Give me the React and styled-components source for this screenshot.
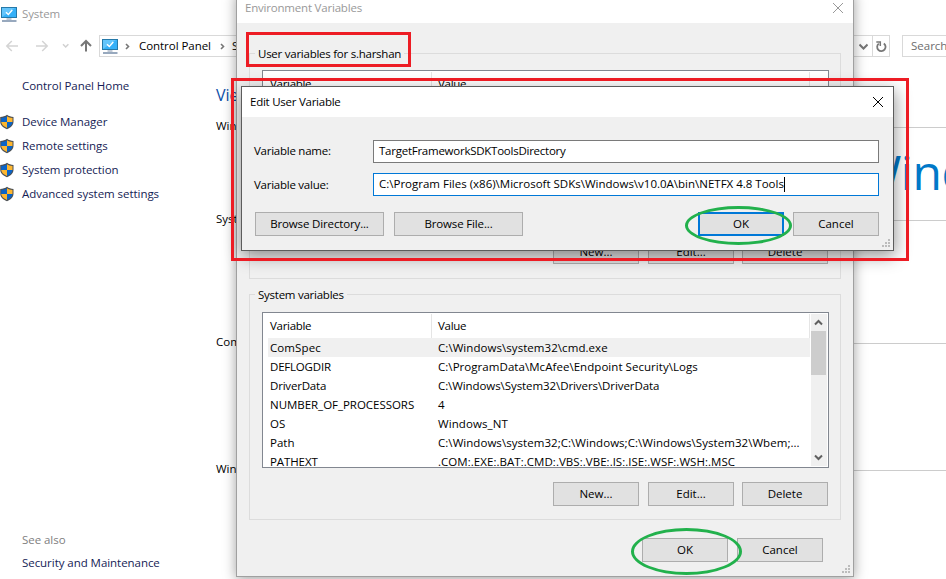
import React from 'react'
import styled, { createGlobalStyle } from 'styled-components'

const GlobalStyle = createGlobalStyle`
  * {
    box-sizing: border-box;
  }

  body {
    margin: 0;
    background: #fff;
    overflow: hidden;
  }
`

const DesktopDiv = styled.div`
  position: relative;
  width: 946px;
  height: 579px;
  overflow: hidden;
  background: #fff;
  color: #000;
  font-family: "Open Sans", "Noto Sans", sans-serif;
  font-size: 11.5px;
  line-height: 16px;
  white-space: nowrap;
`

const Label = styled.span`
  letter-spacing: ${({ $track = 0 }) => $track}px;
`

/* System window */

const SystemTitleDiv = styled.div`
  display: flex;
  align-items: center;
  gap: 5px;
  height: 27px;
  padding-left: 1px;
  color: #999;
`

const NavDiv = styled.div`
  display: flex;
  align-items: center;
  height: 22px;
  margin-top: 8px;
`

const NavButtonsDiv = styled.div`
  display: flex;
  width: 99px;
  flex: none;
`

const AddressDiv = styled.div`
  display: flex;
  align-items: center;
  width: 791px;
  height: 22px;
  flex: none;
  padding-left: 2px;
  border: 1px solid #d9d9d9;
`

const CrumbDiv = styled.div`
  display: flex;
  align-items: center;
  flex: 1;
  padding-left: 6px;
  gap: 6px;
`

const AddressButtonDiv = styled.div`
  display: flex;
  align-items: center;
  justify-content: center;
  width: 17px;
  height: 20px;
  border-left: ${({ $divided }) => $divided ? `1px solid #d9d9d9` : `none`};
`

const SearchDiv = styled.div`
  flex: 1;
  height: 22px;
  margin-left: 12px;
  padding: 2px 8px;
  border: 1px solid #d9d9d9;
  border-right: none;
  color: #6d6d6d;
`

const SystemBodyDiv = styled.div`
  display: flex;
  height: 522px;
`

const SidebarDiv = styled.div`
  display: flex;
  flex-direction: column;
  width: 216px;
  flex: none;
  padding: 21px 0 5px;
  letter-spacing: -0.05px;
`

const SidebarLinkDiv = styled.div`
  display: flex;
  align-items: center;
  height: ${({ $height = 24 }) => $height}px;
  padding-left: ${({ $plain }) => $plain ? 22 : 0}px;
  gap: 8px;
  color: ${({ $muted }) => $muted ? `#808080` : `#151c55`};
`

const SpacerDiv = styled.div`
  flex: ${({ $size }) => $size ? `0 0 ${$size}px` : 1};
`

const ContentDiv = styled.div`
  flex: 1;
  min-width: 0;
`

const PageHeadingDiv = styled.div`
  height: 61px;
  padding-top: 27px;
  font-size: 16px;
  line-height: 22px;
  color: #0b4fa8;
`

const SectionDiv = styled.div`
  height: ${({ $height }) => $height}px;
`

const SectionHeadingDiv = styled.div`
  display: flex;
  align-items: center;
  gap: 10px;
  height: 16px;

  &::after {
    content: "";
    flex: 1;
    height: 1px;
    margin-top: 3px;
    background: #ccc;
  }
`

const BrandDiv = styled.div`
  padding: 8px 0 0 641px;
  font-size: 48px;
  line-height: 60px;
  letter-spacing: -0.5px;
  color: #0078c8;
`

/* Dialogs */

const DialogDiv = styled.div`
  position: absolute;
  background: #f0f0f0;
`

const EnvironmentDialogDiv = styled(DialogDiv)`
  left: 236px;
  top: -8px;
  width: 618px;
  height: 585px;
  border: 1px solid #a0a0a0;
  box-shadow: 0 2px 12px rgba(0, 0, 0, 0.38);
`

const EditDialogDiv = styled(DialogDiv)`
  left: 241px;
  top: 86px;
  width: 653px;
  height: 165px;
  border: 1px solid #5c5c5c;
  box-shadow: 1px 5px 16px rgba(0, 0, 0, 0.42);
`

const DialogTitleDiv = styled.div`
  display: flex;
  align-items: center;
  justify-content: space-between;
  height: 30px;
  padding: 0 9px 0 8px;
  background: #fff;
  color: ${({ $inactive }) => $inactive ? `#999` : `#000`};
`

const GroupDiv = styled.div`
  width: 592px;
  height: 226px;
  margin: ${({ $top }) => $top}px 0 0 12px;
  padding: 0 12px;
  border: 1px solid #dcdcdc;
`

const LegendDiv = styled.div`
  width: fit-content;
  height: 16px;
  margin: -8px 0 ${({ $gap }) => $gap}px -7px;
  padding: 0 3px;
  background: #f0f0f0;
  letter-spacing: -0.25px;
`

const ListDiv = styled.div`
  display: flex;
  width: 567px;
  height: 156px;
  padding: 1px 1px 1px 0;
  border: 1px solid #828790;
  background: #fff;
`

const TableDiv = styled.div`
  width: 548px;
  flex: none;
  overflow: hidden;
`

const TableHeaderDiv = styled.div`
  display: flex;
  height: 24px;
  letter-spacing: -0.3px;
`

const HeaderCellDiv = styled.div`
  width: ${({ $width }) => $width}px;
  padding: 4px 0 0 ${({ $indent }) => $indent}px;
  border-right: 1px solid #e5e5e5;
`

const RowDiv = styled.div`
  display: grid;
  grid-template-columns: 168px 1fr;
  align-items: center;
  height: 19px;
  margin: 0 1px 0 5px;
  padding-left: 2px;
  background: ${({ $selected }) => $selected ? `#f0f0f0` : `transparent`};
`

const ScrollbarDiv = styled.div`
  display: flex;
  flex-direction: column;
  width: 16px;
  flex: none;
  background: #f0f0f0;
`

const ScrollButtonDiv = styled.div`
  display: flex;
  align-items: center;
  justify-content: center;
  width: 15px;
  height: 17px;
`

const ThumbDiv = styled.div`
  width: 15px;
  height: 44px;
  margin-bottom: auto;
  background: #cdcdcd;
`

const ButtonRowDiv = styled.div`
  display: flex;
  justify-content: flex-end;
  gap: 9px;
  margin-top: ${({ $top }) => $top}px;
  padding-right: ${({ $right = 0 }) => $right}px;
`

const Button = styled.button`
  width: ${({ $wide }) => $wide ? 129 : 86}px;
  height: 24px;
  margin-right: ${({ $after = 0 }) => $after}px;
  padding: 0 0 1px;
  border: ${({ $primary }) => $primary ? `2px solid #0078d7` : `1px solid #adadad`};
  background: #e1e1e1;
  color: #000;
  font: inherit;
  letter-spacing: ${({ $wide }) => $wide ? -0.15 : 0}px;
`

const FieldRowDiv = styled.div`
  display: flex;
  align-items: center;
  height: 23px;
  margin: ${({ $top }) => $top}px 14px 0 12px;
`

const FieldLabelDiv = styled.div`
  width: 119px;
  padding-bottom: ${({ $raised }) => $raised ? 2 : 0}px;
  letter-spacing: -0.25px;
`

const FieldDiv = styled.div`
  display: flex;
  align-items: center;
  flex: 1;
  height: 23px;
  padding: 0 5px 1px;
  border: 1px solid ${({ $focused }) => $focused ? `#0078d7` : `#7a7a7a`};
  background: #fff;
`

const CaretSpan = styled.span`
  width: 1px;
  height: 15px;
  background: #000;
`

const GripSvg = styled.svg`
  position: absolute;
  right: 2px;
  bottom: 2px;
`

/* Marks drawn over the windows */

const RedBoxDiv = styled.div`
  position: absolute;
  left: ${({ $x }) => $x}px;
  top: ${({ $y }) => $y}px;
  width: ${({ $width }) => $width}px;
  height: ${({ $height }) => $height}px;
  border: 3px solid #ed1c24;
`

const GreenOvalDiv = styled(RedBoxDiv)`
  border-color: #22b14c;
  border-radius: 50%;
`

const ComputerIcon = () =>
  <svg width="16" height="16" viewBox="0 0 16 16">
    <rect x="0.5" y="1.5" width="15" height="10" fill="#35b0f8" stroke="#2579a9"/>
    <path d="M1 11V2h13z" fill="#64c5fb"/>
    <path d="M5 6.3l2.3 2.2L11.3 4" fill="none" stroke="#fff" strokeWidth="1.4"/>
    <path d="M5.5 13h5" stroke="#8295ad" strokeWidth="1"/>
    <path d="M1 15h14.500" stroke="#7e93ae" strokeWidth="1.6"/>
  </svg>

const ShieldIcon = () =>
  <svg width="14" height="16" viewBox="0 0 14 16">
    <path d="M7 .8C5.200 2.200 3 2.900 .2 3v4.500c0 3.600 2.600 6 6.800 7.800 4.200-1.800 6.500-4.200 6.500-7.800V3C11 2.900 8.800 2.200 7 .8z" fill="#4c5054"/>
    <path d="M7 2.300C5.400 3.300 3.500 3.900 1.200 4.100V8H7z" fill="#0a64c8"/>
    <path d="M7 2.300c1.600 1 3.300 1.600 5.500 1.800V8H7z" fill="#fdb62f"/>
    <path d="M1.200 8H7v6C3.600 12.500 1.500 10.700 1.200 8z" fill="#fdb62f"/>
    <path d="M12.500 8H7v6c3.400-1.500 5.200-3.300 5.500-6z" fill="#0a64c8"/>
  </svg>

const NavIcons = () =>
  <svg width="99" height="22" viewBox="0 0 99 22" fill="none">
    <path d="M18 11H7M11.800 6L6.800 11l5 5M36 11h11M42.200 6l5 5-5 5" stroke="#d4d4d4" strokeWidth="1.500"/>
    <path d="M63 9.300l2.700 2.700 2.700-2.700" stroke="#d0d0d0" strokeWidth="1.500"/>
    <path d="M86 16.500V6.500M81 11l5-5 5 5" stroke="#777" strokeWidth="2"/>
  </svg>

const ChevronIcon = ({ d, color = `#606060`, width = 2 }) =>
  <svg width="9" height="9" viewBox="0 0 9 9" fill="none">
    <path d={d} stroke={color} strokeWidth={width}/>
  </svg>

const RefreshIcon = () =>
  <svg width="12" height="13" viewBox="0 0 12 13" fill="none">
    <path d="M3.800 3.600A4.200 4.200 0 1 0 8.800 3.500" stroke="#777" strokeWidth="1.800"/>
    <path d="M1.300 2h4v4" stroke="#777" strokeWidth="1.500"/>
  </svg>

const CloseIcon = ({ color }) =>
  <svg width="12" height="12" viewBox="0 0 12 12">
    <path d="M1 1l10 10M11 1L1 11" stroke={color} strokeWidth="1"/>
  </svg>

const Grip = () =>
  <GripSvg width="9" height="9" viewBox="0 0 9 9" fill="#bcbcbc">
    <path d="M6 0h2v2H6zM3 3h2v2H3zM6 3h2v2H6zM0 6h2v2H0zM3 6h2v2H3zM6 6h2v2H6z"/>
  </GripSvg>

// name, value, letter spacing of each
const systemVariables = [
  [`ComSpec`, `C:\\Windows\\system32\\cmd.exe`, 0.1, 0.06],
  [`DEFLOGDIR`, `C:\\ProgramData\\McAfee\\Endpoint Security\\Logs`, -0.2, 0.05],
  [`DriverData`, `C:\\Windows\\System32\\Drivers\\DriverData`, -0.2, -0.08],
  [`NUMBER_OF_PROCESSORS`, `4`, -0.03, 0],
  [`OS`, `Windows_NT`, 0, 0.1],
  [`Path`, `C:\\Windows\\system32;C:\\Windows;C:\\Windows\\System32\\Wbem;...`, 0, 0.05],
  [`PATHEXT`, `.COM;.EXE;.BAT;.CMD;.VBS;.VBE;.JS;.JSE;.WSF;.WSH;.MSC`, -0.1, 0.04]
]

const tasks = [`Device Manager`, `Remote settings`, `System protection`, `Advanced system settings`]

const VariableList = ({ rows }) =>
  <ListDiv>
    <TableDiv>
      <TableHeaderDiv>
        <HeaderCellDiv $width={169} $indent={7}>Variable</HeaderCellDiv>
        <HeaderCellDiv $width={378} $indent={6}>Value</HeaderCellDiv>
      </TableHeaderDiv>
      {
        rows.map(([name, value, nameTrack, valueTrack], index) =>
          <RowDiv key={name} $selected={index === 0}>
            <Label $track={nameTrack}>{name}</Label>
            <Label $track={valueTrack}>{value}</Label>
          </RowDiv>
        )
      }
    </TableDiv>
    {
      rows.length > 0 &&
        <ScrollbarDiv>
          <ScrollButtonDiv><ChevronIcon d="M1 6.500l3.500-3.500L8 6.500"/></ScrollButtonDiv>
          <ThumbDiv/>
          <ScrollButtonDiv><ChevronIcon d="M1 2.500L4.500 6 8 2.500"/></ScrollButtonDiv>
        </ScrollbarDiv>
    }
  </ListDiv>

const VariableGroup = ({ title, rows, top, gap }) =>
  <GroupDiv $top={top}>
    <LegendDiv $gap={gap}>{title}</LegendDiv>
    <VariableList rows={rows}/>
    <ButtonRowDiv $top={14}>
      <Button>New...</Button>
      <Button $after={-1}>Edit...</Button>
      <Button>Delete</Button>
    </ButtonRowDiv>
  </GroupDiv>

const SystemWindow = () =>
  <div>
    <SystemTitleDiv><ComputerIcon/><Label $track={-0.1}>System</Label></SystemTitleDiv>
    <NavDiv>
      <NavButtonsDiv><NavIcons/></NavButtonsDiv>
      <AddressDiv>
        <ComputerIcon/>
        <CrumbDiv>
          <ChevronIcon d="M2 2l2.500 2.500L2 7" color="#777" width={1.6}/>
          <Label $track={-0.05}>Control Panel</Label>
          <ChevronIcon d="M4 2l2.500 2.500L4 7" color="#777" width={1.6}/>
          <Label>System and Security</Label>
        </CrumbDiv>
        <AddressButtonDiv><ChevronIcon d="M.500 2.500l4 4 4-4" color="#777"/></AddressButtonDiv>
        <AddressButtonDiv $divided><RefreshIcon/></AddressButtonDiv>
      </AddressDiv>
      <SearchDiv>Search Control Panel</SearchDiv>
    </NavDiv>
    <SystemBodyDiv>
      <SidebarDiv>
        <SidebarLinkDiv $plain $height={16}>Control Panel Home</SidebarLinkDiv>
        <SpacerDiv $size={16}/>
        {tasks.map((task) => <SidebarLinkDiv key={task}><ShieldIcon/>{task}</SidebarLinkDiv>)}
        <SpacerDiv/>
        <SidebarLinkDiv $plain $muted $height={23}>See also</SidebarLinkDiv>
        <SidebarLinkDiv $plain $height={23}>Security and Maintenance</SidebarLinkDiv>
      </SidebarDiv>
      <ContentDiv>
        <PageHeadingDiv>View basic information about your computer</PageHeadingDiv>
        <SectionDiv $height={93}>
          <SectionHeadingDiv>Windows edition</SectionHeadingDiv>
          <BrandDiv>Windows 10</BrandDiv>
        </SectionDiv>
        <SectionDiv $height={123}>
          <SectionHeadingDiv>System</SectionHeadingDiv>
        </SectionDiv>
        <SectionDiv $height={127}>
          <SectionHeadingDiv>Computer name, domain, and workgroup settings</SectionHeadingDiv>
        </SectionDiv>
        <SectionHeadingDiv>Windows activation</SectionHeadingDiv>
      </ContentDiv>
    </SystemBodyDiv>
  </div>

const App = () =>
  <DesktopDiv>
    <GlobalStyle/>
    <SystemWindow/>
    <EnvironmentDialogDiv>
      <DialogTitleDiv $inactive>
        <Label $track={-0.2}>Environment Variables</Label>
        <CloseIcon color="#999"/>
      </DialogTitleDiv>
      <VariableGroup title="User variables for s.harshan" rows={[]} top={30} gap={8}/>
      <VariableGroup title="System variables" rows={systemVariables} top={15} gap={9}/>
      <ButtonRowDiv $top={18} $right={30}>
        <Button>OK</Button>
        <Button>Cancel</Button>
      </ButtonRowDiv>
      <Grip/>
    </EnvironmentDialogDiv>
    <EditDialogDiv>
      <DialogTitleDiv>
        <Label $track={-0.25}>Edit User Variable</Label>
        <CloseIcon color="#000"/>
      </DialogTitleDiv>
      <FieldRowDiv $top={23}>
        <FieldLabelDiv $raised>Variable name:</FieldLabelDiv>
        <FieldDiv><Label $track={-0.25}>TargetFrameworkSDKToolsDirectory</Label></FieldDiv>
      </FieldRowDiv>
      <FieldRowDiv $top={10}>
        <FieldLabelDiv>Variable value:</FieldLabelDiv>
        <FieldDiv $focused>
          <Label>{`C:\\Program Files (x86)\\Microsoft SDKs\\Windows\\v10.0A\\bin\\NETFX 4.8 Tools`}</Label>
          <CaretSpan/>
        </FieldDiv>
      </FieldRowDiv>
      <ButtonRowDiv $top={16} $right={14}>
        <Button $wide $after={1}>Browse Directory...</Button>
        <Button $wide $after={166}>Browse File...</Button>
        <Button $primary>OK</Button>
        <Button>Cancel</Button>
      </ButtonRowDiv>
      <Grip/>
    </EditDialogDiv>
    <RedBoxDiv $x={246} $y={32} $width={165} $height={35}/>
    <RedBoxDiv $x={231} $y={78} $width={678} $height={183}/>
    <GreenOvalDiv $x={685} $y={206} $width={107} $height={39}/>
    <GreenOvalDiv $x={631} $y={528} $width={111} $height={47}/>
  </DesktopDiv>

export default App
